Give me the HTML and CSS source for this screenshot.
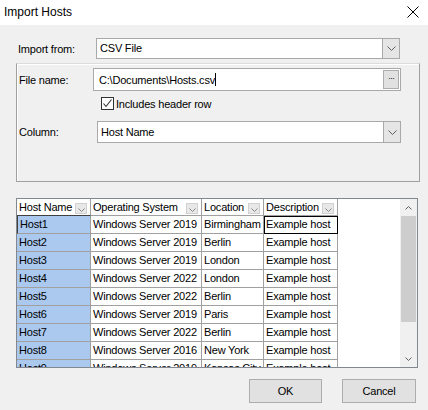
FILE: index.html
```html
<!DOCTYPE html>
<html lang="en">
<head>
<meta charset="utf-8">
<title>Import Hosts</title>
<link rel="stylesheet" href="styles.css">
</head>
<body>
<div class="window">
  <div class="titlebar">
    <span class="title">Import Hosts</span>
    <svg class="close" width="12" height="12" viewBox="0 0 12 12"><path d="M0.5 0.5 L11.5 11.5 M11.5 0.5 L0.5 11.5" stroke="#000" stroke-width="1" fill="none"/></svg>
  </div>

  <div class="content">
    <div class="field-row source-row">
      <span class="lbl lbl-source">Import from:</span>
      <div class="combo combo-source">
        <span class="combo-text">CSV File</span>
        <span class="combo-btn"><svg width="9" height="5" viewBox="0 0 9 5"><path d="M0.5 0.5 L4.5 4.5 L8.5 0.5" stroke="#606060" fill="none"/></svg></span>
      </div>
    </div>

    <div class="group">
      <div class="field-row">
        <span class="lbl lbl-file">File name:</span>
        <div class="textbox">
          <span class="textbox-text">C:\Documents\Hosts.csv<span class="caret"></span></span>
          <span class="browse-btn">···</span>
        </div>
      </div>
      <div class="check-row">
        <span class="checkbox"><svg width="11" height="11" viewBox="0 0 11 11"><path d="M1.5 5.5 L4 8.5 L9.5 1.5" stroke="#333" stroke-width="1.1" fill="none"/></svg></span>
        <span class="check-label">Includes header row</span>
      </div>
      <div class="field-row column-row">
        <span class="lbl lbl-column">Column:</span>
        <div class="combo combo-column">
          <span class="combo-text">Host Name</span>
          <span class="combo-btn"><svg width="9" height="5" viewBox="0 0 9 5"><path d="M0.5 0.5 L4.5 4.5 L8.5 0.5" stroke="#606060" fill="none"/></svg></span>
        </div>
      </div>
    </div>

    <div class="grid">
      <div class="grid-table">
        <div class="grid-row head">
          <div class="cell hcell c-name">Host Name<span class="filter"><svg width="7" height="4" viewBox="0 0 7 4"><path d="M0.5 0.5 L3.5 3.5 L6.5 0.5" stroke="#888" fill="none"/></svg></span></div>
          <div class="cell hcell c-os">Operating System<span class="filter"><svg width="7" height="4" viewBox="0 0 7 4"><path d="M0.5 0.5 L3.5 3.5 L6.5 0.5" stroke="#888" fill="none"/></svg></span></div>
          <div class="cell hcell c-loc">Location<span class="filter"><svg width="7" height="4" viewBox="0 0 7 4"><path d="M0.5 0.5 L3.5 3.5 L6.5 0.5" stroke="#888" fill="none"/></svg></span></div>
          <div class="cell hcell c-desc">Description<span class="filter"><svg width="7" height="4" viewBox="0 0 7 4"><path d="M0.5 0.5 L3.5 3.5 L6.5 0.5" stroke="#888" fill="none"/></svg></span></div>
          <div class="fill"></div>
        </div>
        <div class="grid-row current">
          <div class="cell key">Host1</div><div class="cell">Windows Server 2019</div><div class="cell">Birmingham</div><div class="cell focus">Example host</div><div class="fill"></div>
        </div>
        <div class="grid-row">
          <div class="cell key">Host2</div><div class="cell">Windows Server 2019</div><div class="cell">Berlin</div><div class="cell">Example host</div><div class="fill"></div>
        </div>
        <div class="grid-row">
          <div class="cell key">Host3</div><div class="cell">Windows Server 2019</div><div class="cell">London</div><div class="cell">Example host</div><div class="fill"></div>
        </div>
        <div class="grid-row">
          <div class="cell key">Host4</div><div class="cell">Windows Server 2022</div><div class="cell">London</div><div class="cell">Example host</div><div class="fill"></div>
        </div>
        <div class="grid-row">
          <div class="cell key">Host5</div><div class="cell">Windows Server 2022</div><div class="cell">Berlin</div><div class="cell">Example host</div><div class="fill"></div>
        </div>
        <div class="grid-row">
          <div class="cell key">Host6</div><div class="cell">Windows Server 2019</div><div class="cell">Paris</div><div class="cell">Example host</div><div class="fill"></div>
        </div>
        <div class="grid-row">
          <div class="cell key">Host7</div><div class="cell">Windows Server 2022</div><div class="cell">Berlin</div><div class="cell">Example host</div><div class="fill"></div>
        </div>
        <div class="grid-row">
          <div class="cell key">Host8</div><div class="cell">Windows Server 2016</div><div class="cell">New York</div><div class="cell">Example host</div><div class="fill"></div>
        </div>
        <div class="grid-row">
          <div class="cell key">Host9</div><div class="cell">Windows Server 2019</div><div class="cell">Kansas City</div><div class="cell">Example host</div><div class="fill"></div>
        </div>
      </div>
      <div class="vscroll">
        <span class="sb-arrow"><svg width="7" height="4" viewBox="0 0 7 4"><path d="M0.5 3.5 L3.5 0.5 L6.5 3.5" stroke="#606060" fill="none"/></svg></span>
        <span class="sb-track"><span class="sb-thumb"></span></span>
        <span class="sb-arrow"><svg width="7" height="4" viewBox="0 0 7 4"><path d="M0.5 0.5 L3.5 3.5 L6.5 0.5" stroke="#606060" fill="none"/></svg></span>
      </div>
    </div>

    <div class="buttons">
      <button class="btn btn-ok">OK</button>
      <button class="btn btn-cancel">Cancel</button>
    </div>
  </div>
</div>
</body>
</html>
```

FILE: styles.css
```css
* {
  box-sizing: border-box;
}

html, body {
  margin: 0;
  padding: 0;
}

body {
  width: 428px;
  height: 410px;
  overflow: hidden;
  background: #f0f0f0;
  font-family: "Liberation Sans", Arial, sans-serif;
  font-size: 11px;
  letter-spacing: -0.2px;
  color: #000;
}

.window {
  width: 428px;
  height: 410px;
}

/* title bar */
.titlebar {
  height: 25px;
  background: #fff;
  display: flex;
  align-items: center;
  justify-content: space-between;
  padding: 0 9px 1px 4px;
}

.title {
  font-size: 12px;
  letter-spacing: 0;
}

.close {
  display: block;
}

/* dialog body */
.content {
  padding-left: 16px;
}

.field-row {
  display: flex;
  align-items: center;
}

.source-row {
  margin-top: 13px;
  height: 21px;
}

.lbl {
  flex: none;
  padding-left: 2px;
}

.lbl-source {
  width: 80px;
}

.combo {
  display: flex;
  background: #fff;
  border: 1px solid #a9a9a9;
}

.combo-source {
  width: 304px;
  height: 21px;
}

.combo-text {
  flex: 1;
  padding-left: 3px;
  line-height: 19px;
}

.combo-btn {
  width: 17px;
  flex: none;
  display: flex;
  align-items: center;
  justify-content: center;
  background: #e5e5e5;
  border-left: 1px solid #a9a9a9;
}

.combo-btn svg {
  display: block;
}

/* group box */
.group {
  margin-top: 4px;
  width: 404px;
  height: 119px;
  border: 1px solid #a0a0a0;
  border-top-color: #dcdcdc;
  box-shadow: inset 1px 1px 0 #fff;
  padding: 4px 0 0 0;
}

.lbl-file {
  width: 76px;
}

.textbox {
  width: 308px;
  height: 23px;
  background: #fff;
  border: 1px solid #a9a9a9;
  display: flex;
  align-items: center;
  padding: 0 1px 0 5px;
}

.textbox-text {
  flex: 1;
}

.caret {
  display: inline-block;
  width: 1px;
  height: 13px;
  background: #000;
  vertical-align: -2px;
}

.browse-btn {
  width: 16px;
  height: 19px;
  flex: none;
  background: #e1e1e1;
  border: 1px solid #adadad;
  font-size: 9px;
  line-height: 15px;
  text-align: center;
  color: #222;
  letter-spacing: -1px;
}

.check-row {
  display: flex;
  align-items: center;
  margin-top: 6px;
  padding-left: 84px;
  height: 13px;
}

.checkbox {
  width: 13px;
  height: 13px;
  border: 1px solid #333;
  background: #fff;
  display: flex;
  align-items: center;
  justify-content: center;
  flex: none;
}

.checkbox svg {
  display: block;
}

.check-label {
  margin-left: 2px;
}

.column-row {
  margin-top: 11px;
}

.lbl-column {
  width: 80px;
}

.combo-column {
  width: 304px;
  height: 22px;
}

.combo-column .combo-text {
  line-height: 20px;
}

/* data grid */
.grid {
  margin-top: 16px;
  width: 402px;
  height: 170px;
  border: 1px solid #828790;
  background: #fff;
  display: flex;
}

.grid-table {
  flex: 1;
  overflow: hidden;
}

.grid-row {
  display: grid;
  grid-template-columns: 74px 111px 62px 74px 1fr;
  height: 18px;
}

.grid-row.head {
  height: 17px;
}

.cell {
  border-right: 1px solid #a0a0a0;
  border-bottom: 1px solid #a0a0a0;
  padding-left: 2px;
  line-height: 17px;
  white-space: nowrap;
  overflow: hidden;
}

.hcell {
  display: flex;
  align-items: flex-end;
  justify-content: space-between;
  padding-right: 3px;
  line-height: 16px;
}

.filter {
  width: 12px;
  height: 11px;
  margin-bottom: 1px;
  background: #e8e8e8;
  border: 1px solid #d0d0d0;
  display: flex;
  align-items: center;
  justify-content: center;
  flex: none;
}

.filter svg {
  display: block;
  margin-top: 2px;
}

.key {
  background: #abc9ef;
}

.current .key {
  border-top: 1px solid #404040;
  border-left: 1px solid #404040;
  margin-top: -1px;
  height: 19px;
}

.focus {
  outline: 1px solid #000;
  outline-offset: -1px;
  border-right-color: #000;
}

.fill {
  background: #fff;
}

/* vertical scrollbar */
.vscroll {
  width: 17px;
  flex: none;
  background: #f0f0f0;
  display: flex;
  flex-direction: column;
}

.sb-arrow {
  height: 17px;
  display: flex;
  align-items: center;
  justify-content: center;
  flex: none;
}

.sb-arrow svg {
  display: block;
}

.sb-track {
  flex: 1;
  padding: 0 1px;
}

.sb-thumb {
  display: block;
  height: 106px;
  background: #cdcdcd;
}

/* dialog buttons */
.buttons {
  display: flex;
  justify-content: flex-end;
  gap: 20px;
  margin-top: 11px;
  padding-right: 12px;
}

.btn {
  height: 24px;
  background: #e1e1e1;
  border: 1px solid #adadad;
  font-family: "Liberation Sans", Arial, sans-serif;
  font-size: 11px;
  letter-spacing: -0.2px;
  color: #000;
  padding: 0;
}

.btn-ok {
  width: 73px;
}

.btn-cancel {
  width: 74px;
}
```
